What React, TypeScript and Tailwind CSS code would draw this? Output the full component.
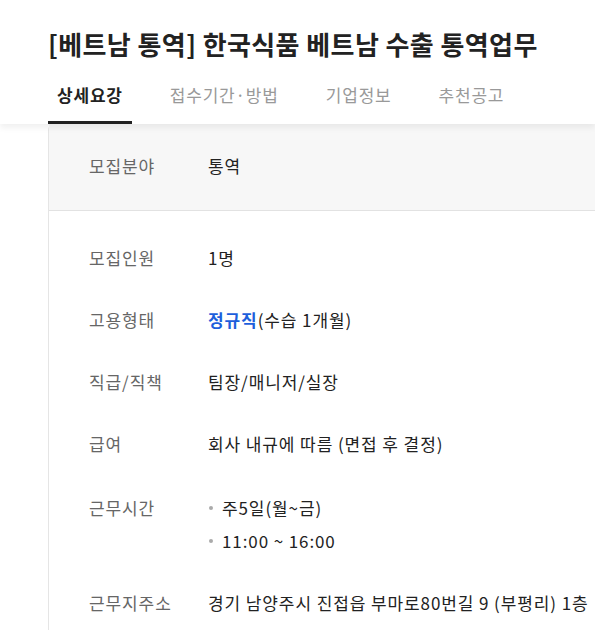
const tabs = ["상세요강", "접수기간·방법", "기업정보", "추천공고"]

const Row = ({ label, children, className = "" }: { label: string; children: React.ReactNode; className?: string }) => (
  <div className={"flex leading-6 " + className}>
    <div className="w-[119px] shrink-0 text-[#666]">{label}</div>
    <div className="text-[#222]">{children}</div>
  </div>
)

const App = () => {
  return (
    <main
      className="min-h-screen w-[595px] overflow-hidden bg-white"
      style={{ fontFamily: '"Noto Sans CJK KR", "Noto Sans", sans-serif' }}
    >
      <div className="relative z-10 bg-white px-12 pt-[26px] shadow-[0_4px_6px_rgba(0,0,0,0.06)]">
        <h1 className="whitespace-nowrap text-[26px] font-bold leading-9 tracking-[0.4px] text-[#222]">
          [베트남 통역] 한국식품 베트남 수출 통역업무
        </h1>
        <nav className="flex gap-[29px]">
          {tabs.map((t, i) => (
            <div
              key={t}
              className={
                i === 0
                  ? "border-b-[3px] border-[#222] px-[9px] pb-[15px] pt-[22px] text-[17px] font-bold leading-[22px] tracking-[0.8px] text-[#222]"
                  : "border-b-[3px] border-transparent px-[9px] pb-[15px] pt-[22px] text-[17px] leading-[22px] tracking-[0.8px] text-[#999]"
              }
            >
              {t}
            </div>
          ))}
        </nav>
      </div>

      <div className="pl-12">
        <div className="w-[700px] rounded-tl-md border-l border-[#e5e5e5] text-[17px] tracking-[0.9px]">
          <div className="border-b border-[#e2e2e2] bg-[#f7f7f7] px-10 pb-[32px] pt-[30px]">
            <Row label="모집분야">통역</Row>
          </div>
          <div className="flex flex-col gap-[38px] whitespace-nowrap px-10 pb-10 pt-[35px]">
            <Row label="모집인원">1명</Row>
            <Row label="고용형태">
              <span className="font-bold text-[#1d5fdc]">정규직</span>(수습 1개월)
            </Row>
            <Row label="직급/직책">팀장/매니저/실장</Row>
            <Row label="급여">회사 내규에 따름 (면접 후 결정)</Row>
            <Row label="근무시간" className="mt-[2px]">
              <ul className="flex flex-col gap-[9px]">
                {["주5일(월~금)", "11:00 ~ 16:00"].map((s) => (
                  <li key={s} className="flex items-center">
                    <span className="ml-[1px] mr-[9px] h-[4px] w-[4px] rounded-full bg-[#aaa]" />
                    {s}
                  </li>
                ))}
              </ul>
            </Row>
            <Row label="근무지주소">경기 남양주시 진접읍 부마로80번길 9 (부평리) 1층</Row>
          </div>
        </div>
      </div>
    </main>
  )
}

export default App
